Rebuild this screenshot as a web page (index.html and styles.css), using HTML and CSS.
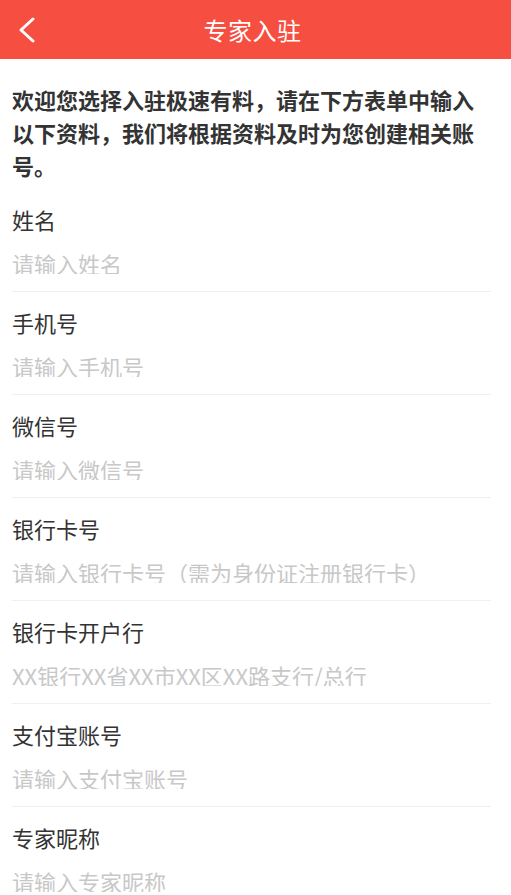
FILE: index.html
```html
<!DOCTYPE html>
<html lang="zh-CN">
<head>
<meta charset="utf-8">
<title>专家入驻</title>
<link rel="stylesheet" href="styles.css">
</head>
<body>
<header class="topbar">
  <div class="topbar-left">
    <svg class="back" width="16" height="26" viewBox="0 0 16 26" aria-hidden="true">
      <polyline points="14,2 2,13 14,24" fill="none" stroke="#fff" stroke-width="3" stroke-linecap="round" stroke-linejoin="round"/>
    </svg>
  </div>
  <h1 class="title">专家入驻</h1>
  <div class="topbar-right"></div>
</header>
<main class="content">
  <p class="intro">欢迎您选择入驻极速有料，请在下方表单中输入以下资料，我们将根据资料及时为您创建相关账号。</p>
  <form class="form">
    <label class="field"><span class="label">姓名</span><input class="input" type="text" placeholder="请输入姓名"></label>
    <label class="field"><span class="label">手机号</span><input class="input" type="text" placeholder="请输入手机号"></label>
    <label class="field"><span class="label">微信号</span><input class="input" type="text" placeholder="请输入微信号"></label>
    <label class="field"><span class="label">银行卡号</span><input class="input" type="text" placeholder="请输入银行卡号（需为身份证注册银行卡）"></label>
    <label class="field"><span class="label">银行卡开户行</span><input class="input" type="text" placeholder="XX银行XX省XX市XX区XX路支行/总行"></label>
    <label class="field"><span class="label">支付宝账号</span><input class="input" type="text" placeholder="请输入支付宝账号"></label>
    <label class="field"><span class="label">专家昵称</span><input class="input" type="text" placeholder="请输入专家昵称"></label>
  </form>
</main>
</body>
</html>
```
FILE: styles.css
```css
* { box-sizing: border-box; }
html, body { margin: 0; padding: 0; background: #fff; }
body {
  font-family: "Noto Sans CJK SC", "Noto Sans", sans-serif;
  color: #333;
}
.topbar {
  height: 59px;
  background: #f64e40;
  display: grid;
  grid-template-columns: 1fr auto 1fr;
  align-items: center;
}
.topbar-left {
  display: flex;
  align-items: center;
  padding-left: 19px;
  padding-top: 1px;
}
.back { display: block; }
.title {
  margin: 0;
  font-size: 24px;
  font-weight: normal;
  color: #fff;
  line-height: 30px;
  letter-spacing: 0.5px;
  transform: translateX(-3px);
}
.content {
  padding: 24px 20px 0 12px;
}
.intro {
  margin: 0 0 7px;
  font-size: 22px;
  line-height: 33px;
  font-weight: bold;
  color: #333;
}
.form {
  display: flex;
  flex-direction: column;
}
.field {
  display: flex;
  flex-direction: column;
  gap: 22px;
  padding: 19px 0 17px;
  border-bottom: 1px solid #efefef;
}
.label {
  font-size: 22px;
  line-height: 22px;
  color: #333;
}
.input {
  border: none;
  outline: none;
  padding: 0;
  margin: 0;
  height: 22px;
  width: 100%;
  font-family: inherit;
  font-size: 22px;
  line-height: 22px;
  color: #333;
  background: transparent;
}
.input::placeholder { color: #c8c8c8; }
```
